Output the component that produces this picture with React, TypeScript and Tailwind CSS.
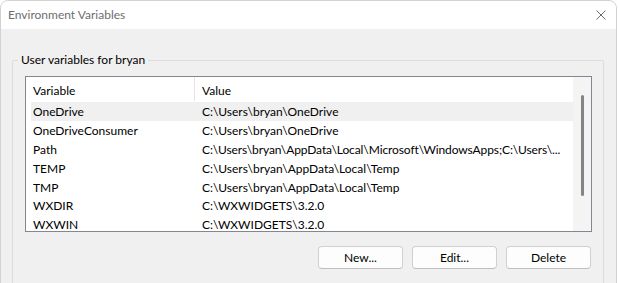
import React from "react";

const rows: [string, string][] = [
  ["OneDrive", "C:\\Users\\bryan\\OneDrive"],
  ["OneDriveConsumer", "C:\\Users\\bryan\\OneDrive"],
  ["Path", "C:\\Users\\bryan\\AppData\\Local\\Microsoft\\WindowsApps;C:\\Users\\..."],
  ["TEMP", "C:\\Users\\bryan\\AppData\\Local\\Temp"],
  ["TMP", "C:\\Users\\bryan\\AppData\\Local\\Temp"],
  ["WXDIR", "C:\\WXWIDGETS\\3.2.0"],
  ["WXWIN", "C:\\WXWIDGETS\\3.2.0"],
];

function Btn({ label }: { label: string }) {
  return (
    <button className="w-[85px] h-[23px] bg-[#fdfdfd] border border-[#d0d0d0] border-b-[#bdbdbd] rounded-[4px] text-[12px] text-black leading-none flex items-center justify-center">
      {label}
    </button>
  );
}

export default function App() {
  return (
    <div
      className="w-[618px] h-[283px] overflow-hidden bg-white"
      style={{ fontFamily: '"Lato", "Noto Sans", sans-serif' }}
    >
      <div className="w-[617px] h-[290px] bg-[#f0f0f0] border border-[#d2d2d2] rounded-t-[8px] overflow-hidden flex flex-col">
        <div className="h-[28px] bg-white shrink-0 flex items-center justify-between pl-[7px] pr-[10px]">
          <span className="text-[12px] text-[#6e6e6e] leading-none">Environment Variables</span>
          <svg width="10" height="10" viewBox="0 0 10 10">
            <path d="M0.5 0.5 L9.5 9.5 M9.5 0.5 L0.5 9.5" stroke="#6a6a6a" strokeWidth="1" fill="none" />
          </svg>
        </div>
        <div className="pl-[11px] pt-[23px]">
          <fieldset className="w-[592px] h-[260px] border border-[#dcdcdc] rounded-[2px]">
            <legend className="ml-[5px] px-[3px] text-[12px] leading-[16px] text-black">
              User variables for bryan
            </legend>
            <div className="pl-[12px] pt-[8px]">
              <div className="w-[567px] h-[156px] border border-[#828790] bg-white flex">
                <div className="w-[547px] flex flex-col overflow-hidden">
                  <div className="h-[25px] shrink-0 flex text-[12px] text-black">
                    <div className="w-[168px] pl-[7px] pt-[2px] flex items-center">Variable</div>
                    <div className="w-px bg-[#e5e5e5] h-[24px]" />
                    <div className="flex-1 pl-[7px] pt-[2px] flex items-center">Value</div>
                  </div>
                  {rows.map(([k, v], i) => (
                    <div
                      key={k}
                      className={`h-[18.8px] shrink-0 ml-[5px] pl-[2px] pt-[2px] flex items-center text-[12px] text-black whitespace-nowrap ${
                        i === 0 ? "bg-[#f0f0f0]" : ""
                      }`}
                    >
                      <div className="w-[169px] shrink-0">{k}</div>
                      <div className={`flex-1 ${i === 2 ? "tracking-[-0.1px]" : ""}`}>{v}</div>
                    </div>
                  ))}
                </div>
                <div className="w-[18px] bg-[#f4f4f4] pt-[18px] pl-[8px]">
                  <div className="w-[3px] h-[101px] rounded-full bg-[#858585]" />
                </div>
              </div>
              <div className="w-[567px] mt-[14px] pr-[1px] flex justify-end gap-[9px]">
                <Btn label="New..." />
                <Btn label="Edit..." />
                <Btn label="Delete" />
              </div>
            </div>
          </fieldset>
        </div>
      </div>
    </div>
  );
}
